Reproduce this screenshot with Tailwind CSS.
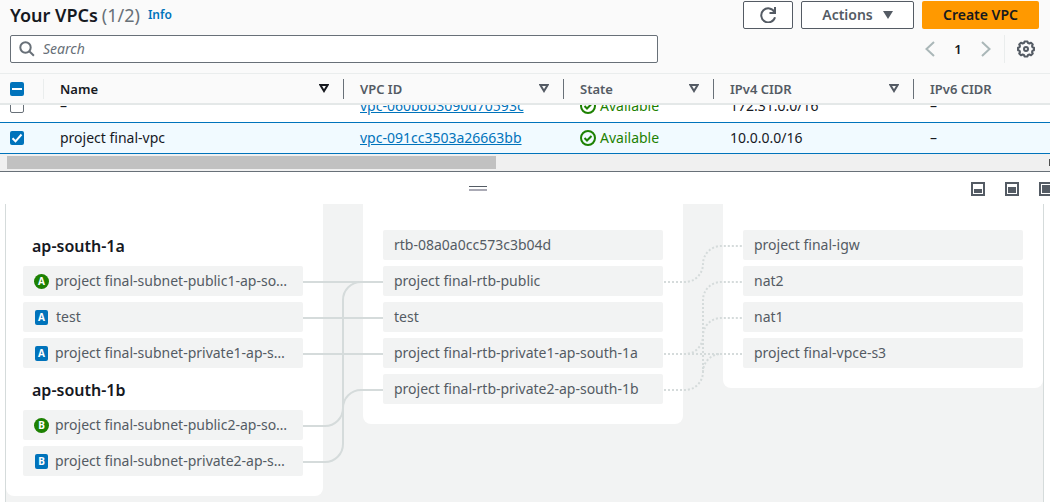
<!DOCTYPE html>
<html lang="en">
<head>
<meta charset="utf-8">
<meta name="viewport" content="width=device-width, initial-scale=1">
<title>Your VPCs</title>
<script src="https://cdn.jsdelivr.net/npm/@tailwindcss/browser@4"></script>
</head>
<body class="bg-white font-['Noto_Sans','Open_Sans',sans-serif] text-sm leading-5 text-[#16191f]">
<div class="flex min-h-screen flex-col overflow-hidden">

  <!-- Title, actions and filter -->
  <header class="border-b border-[#eaeded] bg-[#fafafa] pt-px pr-[11px] pb-[10px] pl-[10px]">
    <div class="flex h-7 items-center gap-2">
      <h1 class="flex items-baseline gap-1 text-lg leading-7 font-semibold">Your VPCs <span class="font-normal text-[#687078]">(1/2)</span></h1>
      <a href="#" class="text-xs font-semibold text-[#0073bb]">Info</a>
      <div class="ml-auto flex gap-2">
        <button type="button" aria-label="Refresh" class="flex h-7 w-[50px] items-center justify-center rounded-xs border border-[#545b64] bg-white text-[#545b64]">
          <svg class="size-4" viewBox="0 0 16 16" fill="none" stroke="currentColor" stroke-width="2"><path d="M15 10.200A7 7 0 1 1 14.400 5M15 0v6H9.500"/></svg>
        </button>
        <button type="button" class="flex h-7 w-[113px] items-center justify-center gap-[10px] rounded-xs border border-[#545b64] bg-white font-semibold text-[#545b64]">Actions
          <svg class="h-2 w-[10px]" viewBox="0 0 10 8" fill="currentColor"><path d="M0 0h10L5 8z"/></svg>
        </button>
        <button type="button" class="h-7 w-[117px] rounded-xs bg-[#ff9900] font-semibold">Create VPC</button>
      </div>
    </div>
    <div class="mt-[6px] flex h-7 items-center justify-between">
      <label class="flex h-7 w-[648px] items-center gap-2 rounded-xs border border-[#687078] bg-white pl-2 text-[#687078]">
        <svg class="size-4" viewBox="0 0 16 16" fill="none" stroke="currentColor" stroke-width="2"><circle cx="6.5" cy="6.5" r="5.2"/><path d="M10.3 10.3l4.600 4.400"/></svg>
        <input type="text" aria-label="Search" placeholder="Search" class="min-w-0 flex-1 outline-none placeholder:text-[#687078] placeholder:italic">
      </label>
      <nav aria-label="Pagination" class="flex items-center pr-1">
        <button type="button" aria-label="Previous page" class="text-[#aab7b8]"><svg class="h-4 w-[10px]" viewBox="0 0 10 16" fill="none" stroke="currentColor" stroke-width="2"><path d="M9 1L1.500 8 9 15"/></svg></button>
        <button type="button" class="w-[46px] text-[13px] font-semibold">1</button>
        <button type="button" aria-label="Next page" class="text-[#aab7b8]"><svg class="h-4 w-[10px]" viewBox="0 0 10 16" fill="none" stroke="currentColor" stroke-width="2"><path d="M1 1l7.500 7L1 15"/></svg></button>
        <span class="mr-3 ml-[13px] h-7 w-px bg-[#eaeded]"></span>
        <button type="button" aria-label="Preferences" class="text-[#545b64]">
          <svg class="size-[18px]" viewBox="0 0 18 18" fill="none" stroke="currentColor" stroke-width="2" stroke-linejoin="round"><path d="M7.500 1.500h3l.5 1.500 1.500.5 1.500-.8 1.800 1.800-.8 1.500.5 1.300 1.500.5v2.400l-1.500.5-.5 1.300.8 1.500-1.800 1.800-1.500-.8-1.500.5-.5 1.500h-3L7 15l-1.500-.5-1.500.8-1.800-1.800.8-1.500-.5-1.300-1.500-.5V7.800L2.500 7.300 3 6l-.8-1.500L4 2.700l1.500.8L7 3z"/><circle cx="9" cy="9" r="2"/></svg>
        </button>
      </nav>
    </div>
  </header>

  <!-- VPC list -->
  <table class="w-full table-fixed border-collapse text-left">
    <colgroup><col class="w-[43px]"><col class="w-[300px]"><col class="w-[220px]"><col class="w-[150px]"><col class="w-[200px]"><col></colgroup>
    <thead class="border-b-2 border-[#e4e8e8] bg-[#fafafa] text-[13px] text-[#545b64]">
      <tr class="h-[30px]">
        <th class="p-0 pl-[10px]"><label class="relative block size-[14px] rounded-xs bg-[#0073bb]"><input type="checkbox" aria-label="Select all" class="absolute inset-0 m-0 size-[14px] opacity-0"><span class="absolute top-[6px] left-[2px] h-[2px] w-[10px] bg-white"></span></label></th>
        <th class="p-0 font-semibold"><div class="flex h-5 items-center justify-between border-l border-[#eaeded] pr-[14px] pl-4 text-[#16191f]">Name <svg class="h-[9px] w-[10px]" viewBox="0 0 10 9" fill="none" stroke="currentColor" stroke-width="2"><path d="M1.300 1h7.400L5 7z"/></svg></div></th>
        <th class="p-0 font-semibold"><div class="flex h-5 items-center justify-between border-l border-[#687078] pr-[14px] pl-4">VPC ID <svg class="h-[9px] w-[10px]" viewBox="0 0 10 9" fill="none" stroke="currentColor" stroke-width="2"><path d="M1.300 1h7.400L5 7z"/></svg></div></th>
        <th class="p-0 font-semibold"><div class="flex h-5 items-center justify-between border-l border-[#687078] pr-[14px] pl-4">State <svg class="h-[9px] w-[10px]" viewBox="0 0 10 9" fill="none" stroke="currentColor" stroke-width="2"><path d="M1.300 1h7.400L5 7z"/></svg></div></th>
        <th class="p-0 font-semibold"><div class="flex h-5 items-center justify-between border-l border-[#687078] pr-[14px] pl-4">IPv4 CIDR <svg class="h-[9px] w-[10px]" viewBox="0 0 10 9" fill="none" stroke="currentColor" stroke-width="2"><path d="M1.300 1h7.400L5 7z"/></svg></div></th>
        <th class="p-0 font-semibold"><div class="flex h-5 items-center border-l border-[#687078] pl-4">IPv6 CIDR</div></th>
      </tr>
    </thead>
    <tbody>
      <!-- Row partly scrolled under the header -->
      <tr>
        <td class="p-0"><div class="flex h-[17px] items-end overflow-hidden pl-[10px]"><div class="flex h-8 shrink-0 items-center"><input type="checkbox" aria-label="Select vpc-060b6b3090d70593c" class="size-[14px] appearance-none rounded-xs border border-[#687078] bg-white"></div></div></td>
        <td class="p-0"><div class="flex h-[17px] items-end overflow-hidden pl-[17px]"><div class="flex h-[33px] shrink-0 items-center">–</div></div></td>
        <td class="p-0"><div class="flex h-[17px] items-end overflow-hidden pl-[17px]"><div class="flex h-[33px] shrink-0 items-center"><a href="#" class="text-[#0073bb] underline">vpc-060b6b3090d70593c</a></div></div></td>
        <td class="p-0"><div class="flex h-[17px] items-end overflow-hidden pl-[17px]"><div class="flex h-[33px] shrink-0 items-center gap-1 text-[#1d8102]"><svg class="size-4" viewBox="0 0 16 16" fill="none" stroke="currentColor" stroke-width="2"><circle cx="8" cy="8" r="7"/><path d="M4.500 8l2.500 2.500L11.500 6"/></svg>Available</div></div></td>
        <td class="p-0"><div class="flex h-[17px] items-end overflow-hidden pl-[17px]"><div class="flex h-[33px] shrink-0 items-center">172.31.0.0/16</div></div></td>
        <td class="p-0"><div class="flex h-[17px] items-end overflow-hidden pl-[17px]"><div class="flex h-[33px] shrink-0 items-center">–</div></div></td>
      </tr>
      <tr class="h-[31px] border-y border-[#0073bb] bg-[#f1faff]">
        <td class="py-0 pl-[10px]"><label class="relative block size-[14px]"><input type="checkbox" checked aria-label="Select project final-vpc" class="block size-[14px] appearance-none rounded-xs bg-[#0073bb]"><svg class="pointer-events-none absolute inset-0 size-[14px]" viewBox="0 0 14 14" fill="none" stroke="#fff" stroke-width="2"><path d="M2.500 7.300l3 3L11.500 3.500"/></svg></label></td>
        <td class="py-0 pl-[17px]">project final-vpc</td>
        <td class="py-0 pl-[17px]"><a href="#" class="text-[#0073bb] underline">vpc-091cc3503a26663bb</a></td>
        <td class="py-0 pl-[17px]"><div class="flex items-center gap-1 text-[#1d8102]"><svg class="size-4" viewBox="0 0 16 16" fill="none" stroke="currentColor" stroke-width="2"><circle cx="8" cy="8" r="7"/><path d="M4.500 8l2.500 2.500L11.500 6"/></svg>Available</div></td>
        <td class="py-0 pl-[17px]">10.0.0.0/16</td>
        <td class="py-0 pl-[17px]">–</td>
      </tr>
    </tbody>
  </table>

  <!-- Horizontal scrollbar -->
  <div class="flex h-[18px] items-center justify-between border-b border-[#687078] bg-[#f0f0f0] pl-[7px]">
    <div class="h-[13px] w-[489px] bg-[#c1c1c1]"></div>
    <div class="h-[7px] w-px bg-[#505050]"></div>
  </div>

  <!-- Split panel toolbar -->
  <div class="grid h-8 grid-cols-[1fr_auto_1fr] items-center pt-px">
    <span></span>
    <button type="button" aria-label="Resize panel" class="mr-[94px] flex w-[18px] flex-col gap-[2px]"><span class="h-px w-full bg-[#545b64]"></span><span class="h-[2px] w-full bg-[#aaaab5]"></span></button>
    <div class="-mr-[3px] flex gap-5 justify-self-end text-[#545b64]">
      <button type="button" aria-label="Small panel"><svg class="size-[14px]" viewBox="0 0 14 14" fill="currentColor"><path d="M1 1h12v12H1z" fill="none" stroke="currentColor" stroke-width="2"/><path d="M3 7h8v4H3z"/></svg></button>
      <button type="button" aria-label="Medium panel"><svg class="size-[14px]" viewBox="0 0 14 14" fill="currentColor"><path d="M1 1h12v12H1z" fill="none" stroke="currentColor" stroke-width="2"/><path d="M3 5h8v6H3z"/></svg></button>
      <button type="button" aria-label="Full panel"><svg class="size-[14px]" viewBox="0 0 14 14" fill="currentColor"><path d="M1 1h12v12H1z" fill="none" stroke="currentColor" stroke-width="2"/><path d="M3 3h8v8H3z"/></svg></button>
    </div>
  </div>

  <!-- Resource map -->
  <main class="relative mr-[6px] ml-[5px] flex flex-1 items-start gap-10 border-x border-[#d5dbdb] bg-[#f2f3f3] text-[#545b64]">
    <section class="flex w-[317px] shrink-0 flex-col gap-[6px] rounded-b-lg bg-white pt-[26px] pr-5 pb-5 pl-[17px]">
      <h2 class="h-[30px] pt-[2px] pl-[9px] text-base leading-7 font-semibold text-[#16191f]">ap-south-1a</h2>
      <div class="flex h-[30px] items-center gap-[6px] rounded-xs bg-[#f2f3f3] pl-[11px]"><span class="flex size-[15px] items-center justify-center rounded-full bg-[#1d8102] text-[10px] font-bold text-white">A</span>project final-subnet-public1-ap-so…</div>
      <div class="flex h-[30px] items-center gap-2 rounded-xs bg-[#f2f3f3] pl-3"><span class="flex h-[15px] w-[13px] items-center justify-center rounded-xs bg-[#0073bb] text-[10px] font-bold text-white">A</span>test</div>
      <div class="flex h-[30px] items-center gap-[7px] rounded-xs bg-[#f2f3f3] pl-3"><span class="flex h-[15px] w-[13px] items-center justify-center rounded-xs bg-[#0073bb] text-[10px] font-bold text-white">A</span>project final-subnet-private1-ap-s…</div>
      <h2 class="h-[30px] pt-[2px] pl-[9px] text-base leading-7 font-semibold text-[#16191f]">ap-south-1b</h2>
      <div class="flex h-[30px] items-center gap-[6px] rounded-xs bg-[#f2f3f3] pl-[11px]"><span class="flex size-[15px] items-center justify-center rounded-full bg-[#1d8102] text-[10px] font-bold text-white">B</span>project final-subnet-public2-ap-so…</div>
      <div class="flex h-[30px] items-center gap-[7px] rounded-xs bg-[#f2f3f3] pl-3"><span class="flex h-[15px] w-[13px] items-center justify-center rounded-xs bg-[#0073bb] text-[10px] font-bold text-white">B</span>project final-subnet-private2-ap-s…</div>
    </section>
    <section class="flex w-80 shrink-0 flex-col gap-[6px] rounded-b-lg bg-white px-5 pt-[26px] pb-5">
      <div class="flex h-[30px] items-center rounded-xs bg-[#f2f3f3] pl-[11px]">rtb-08a0a0cc573c3b04d</div>
      <div class="flex h-[30px] items-center rounded-xs bg-[#f2f3f3] pl-[11px]">project final-rtb-public</div>
      <div class="flex h-[30px] items-center rounded-xs bg-[#f2f3f3] pl-[11px]">test</div>
      <div class="flex h-[30px] items-center rounded-xs bg-[#f2f3f3] pl-[11px]">project final-rtb-private1-ap-south-1a</div>
      <div class="flex h-[30px] items-center rounded-xs bg-[#f2f3f3] pl-[11px]">project final-rtb-private2-ap-south-1b</div>
    </section>
    <section class="flex w-80 shrink-0 flex-col gap-[6px] rounded-b-lg bg-white px-5 pt-[26px] pb-5">
      <div class="flex h-[30px] items-center rounded-xs bg-[#f2f3f3] pl-[11px]">project final-igw</div>
      <div class="flex h-[30px] items-center rounded-xs bg-[#f2f3f3] pl-[11px]">nat2</div>
      <div class="flex h-[30px] items-center rounded-xs bg-[#f2f3f3] pl-[11px]">nat1</div>
      <div class="flex h-[30px] items-center rounded-xs bg-[#f2f3f3] pl-[11px]">project final-vpce-s3</div>
    </section>
    <!-- Connections between resources -->
    <svg class="pointer-events-none absolute top-0 left-0 h-[292px] w-[1037px]" viewBox="0 0 1037 292" fill="none" stroke="#d5dbdb" stroke-width="2">
      <path d="M297 78h80M297 114h80M297 150h80"/>
      <path d="M297 222h22a18 18 0 0 0 18-18V96a18 18 0 0 1 18-18h22"/>
      <path d="M297 258h22a18 18 0 0 0 18-18V204a18 18 0 0 1 18-18h22"/>
      <path stroke-dasharray="2 2" d="M658 78h21a18 18 0 0 0 18-18a18 18 0 0 1 18-18h22"/>
      <path stroke-dasharray="2 2" d="M658 150h21a18 18 0 0 0 18-18a18 18 0 0 1 18-18h22"/>
      <path stroke-dasharray="2 2" d="M658 150h79"/>
      <path stroke-dasharray="2 2" d="M658 186h21a18 18 0 0 0 18-18V96a18 18 0 0 1 18-18h22"/>
      <path stroke-dasharray="2 2" d="M697 168a18 18 0 0 1 18-18"/>
    </svg>
  </main>
</div>
</body>
</html>
